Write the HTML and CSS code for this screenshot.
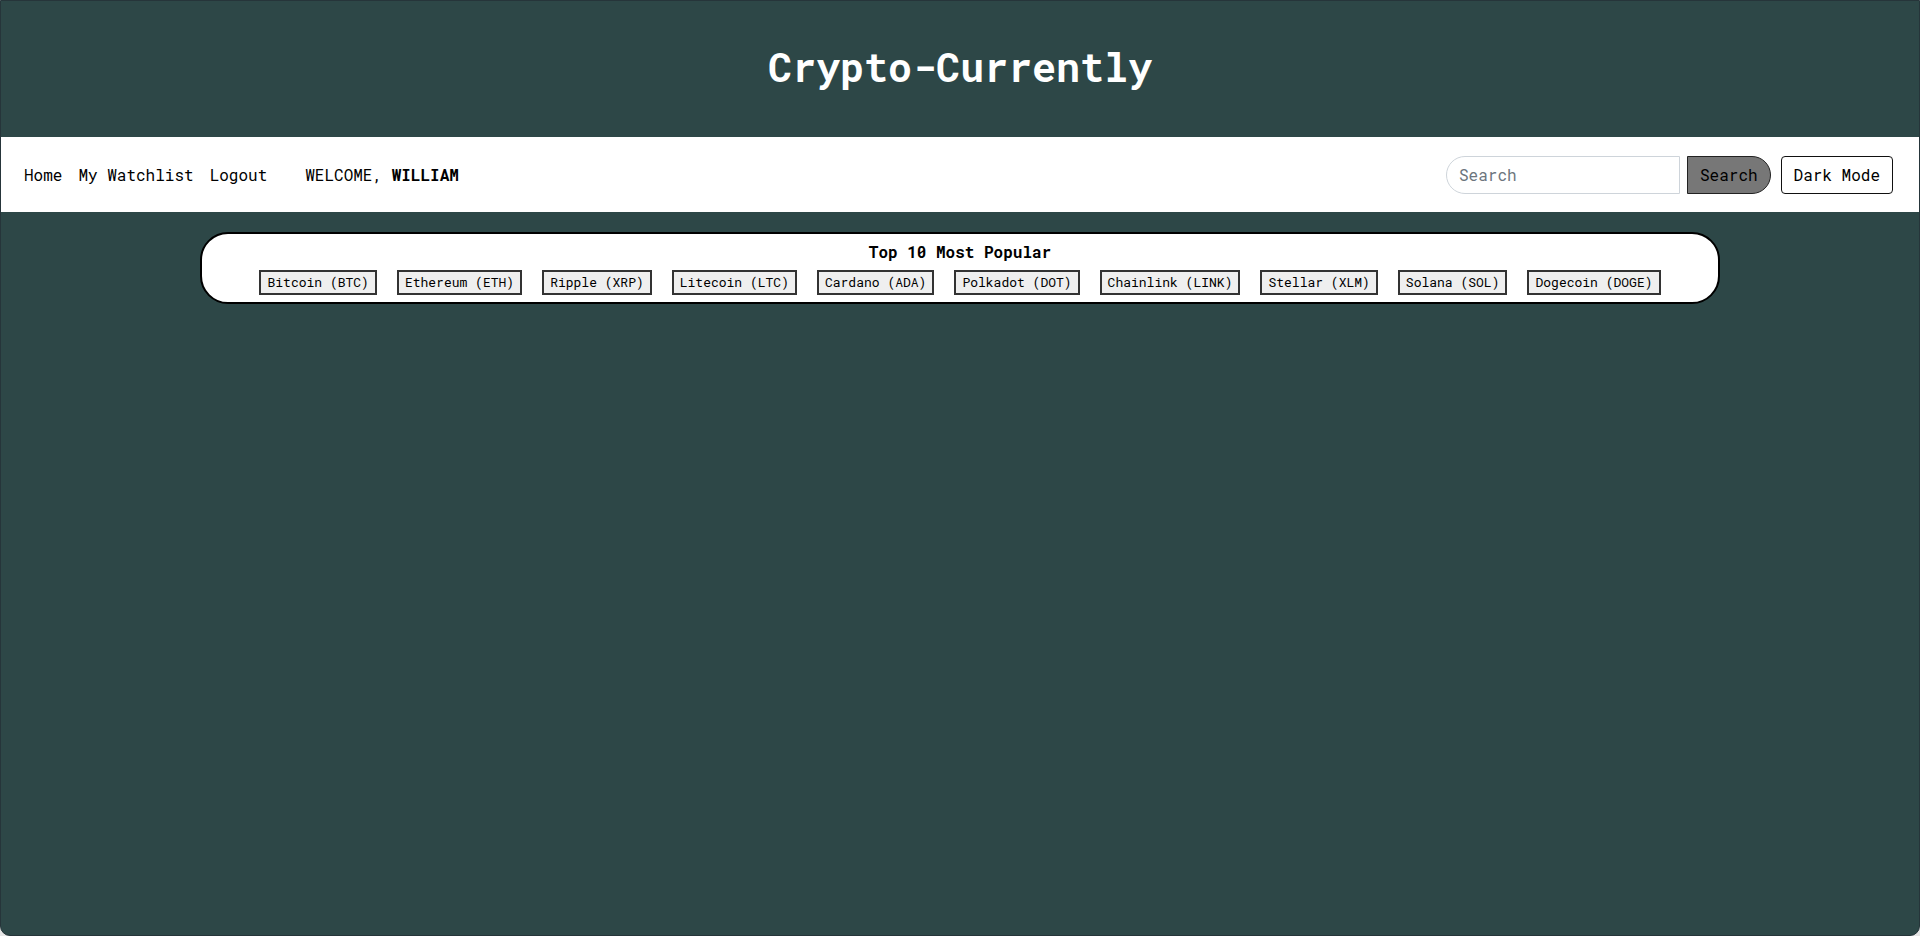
FILE: index.html
```html
<!DOCTYPE html>
<html lang="en">
<head>
<meta charset="utf-8">
<title>Crypto-Currently</title>
<link rel="stylesheet" href="styles.css">
</head>
<body>
<div class="page">
  <header class="masthead">
    <h1 class="site-title">Crypto-Currently</h1>
  </header>
  <nav class="navbar">
    <div class="nav-left">
      <a class="nav-link" href="#">Home</a>
      <a class="nav-link" href="#">My Watchlist</a>
      <a class="nav-link" href="#">Logout</a>
      <span class="welcome">WELCOME, <strong>WILLIAM</strong></span>
    </div>
    <div class="nav-right">
      <form class="search-form">
        <input class="search-input" type="text" placeholder="Search">
        <button class="search-btn" type="button">Search</button>
      </form>
      <button class="mode-btn" type="button">Dark Mode</button>
    </div>
  </nav>
  <main class="content">
    <section class="popular">
      <h2 class="popular-title">Top 10 Most Popular</h2>
      <div class="coin-row">
        <button class="coin-btn" type="button">Bitcoin (BTC)</button>
        <button class="coin-btn" type="button">Ethereum (ETH)</button>
        <button class="coin-btn" type="button">Ripple (XRP)</button>
        <button class="coin-btn" type="button">Litecoin (LTC)</button>
        <button class="coin-btn" type="button">Cardano (ADA)</button>
        <button class="coin-btn" type="button">Polkadot (DOT)</button>
        <button class="coin-btn" type="button">Chainlink (LINK)</button>
        <button class="coin-btn" type="button">Stellar (XLM)</button>
        <button class="coin-btn" type="button">Solana (SOL)</button>
        <button class="coin-btn" type="button">Dogecoin (DOGE)</button>
      </div>
    </section>
  </main>
</div>
</body>
</html>
```

FILE: styles.css
```css
* {
  box-sizing: border-box;
}

html, body {
  margin: 0;
  padding: 0;
  background: #e6e6e6;
}

body {
  font-family: "Roboto Mono", "Liberation Mono", "DejaVu Sans Mono", monospace;
  color: #000;
}

.page {
  width: 1920px;
  height: 936px;
  background: #2d4747;
  border: 1px solid #26353a;
  border-radius: 0 0 10px 10px;
  overflow: hidden;
  display: flex;
  flex-direction: column;
}

.masthead {
  height: 136px;
  flex-shrink: 0;
  display: flex;
  align-items: center;
  justify-content: center;
}

.site-title {
  margin: 0;
  color: #fff;
  font-size: 40px;
  font-weight: 700;
  line-height: 1;
  padding-bottom: 4px;
}

.navbar {
  height: 75px;
  flex-shrink: 0;
  background: #fff;
  display: flex;
  align-items: center;
  justify-content: space-between;
  padding: 0 26px 0 23px;
}

.nav-left {
  display: flex;
  align-items: center;
  gap: 16px;
  font-size: 16px;
}

.nav-link {
  color: #000;
  text-decoration: none;
}

.welcome {
  margin-left: 22px;
}

.welcome strong {
  font-weight: 700;
}

.nav-right {
  display: flex;
  align-items: center;
  gap: 10px;
}

.search-form {
  display: flex;
  align-items: center;
  gap: 7px;
  margin: 0;
}

.search-input {
  width: 234px;
  height: 38px;
  border: 1px solid #ced4da;
  border-radius: 19px 0 0 19px;
  padding: 0 12px;
  font-family: inherit;
  font-size: 16px;
  color: #212529;
  background: #fff;
  outline: none;
}

.search-input::placeholder {
  color: #6c757d;
}

.search-btn {
  height: 38px;
  padding: 0 12px;
  background: #777;
  border: 1px solid #222;
  border-radius: 0 19px 19px 0;
  font-family: inherit;
  font-size: 16px;
  color: #000;
  white-space: nowrap;
}

.mode-btn {
  height: 38px;
  padding: 0 12px;
  background: #fff;
  border: 1px solid #111;
  border-radius: 4px;
  font-family: inherit;
  font-size: 16px;
  color: #000;
  white-space: nowrap;
}

.content {
  flex: 1;
  padding: 20px 199px 0;
}

.popular {
  background: #fff;
  border: 2px solid #000;
  border-radius: 28px;
  height: 72px;
  padding: 7px 0 0;
  display: flex;
  flex-direction: column;
  align-items: center;
}

.popular-title {
  margin: 0;
  font-size: 16px;
  font-weight: 700;
  line-height: 22px;
}

.coin-row {
  margin-top: 7px;
  display: flex;
  justify-content: center;
  gap: 20px;
}

.coin-btn {
  height: 25px;
  padding: 0 6px;
  background: #efefef;
  border: 2px solid #333;
  border-radius: 0;
  font-family: inherit;
  font-size: 13px;
  color: #000;
  line-height: 21px;
  white-space: nowrap;
}
```
